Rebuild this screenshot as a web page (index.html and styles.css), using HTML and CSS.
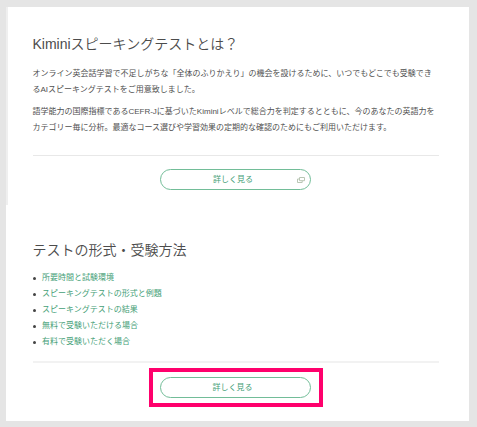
FILE: index.html
```html
<!DOCTYPE html>
<html lang="ja">
<head>
  <meta charset="UTF-8" />
  <meta name="viewport" content="width=device-width, initial-scale=1.0"/>
  <title>Kiminiスピーキングテスト</title>
  <link rel="stylesheet" href="styles.css">
</head>
<body>

<main>
  <section class="about">
    <h2>Kiminiスピーキングテストとは？</h2>
    <p>オンライン英会話学習で不足しがちな「全体のふりかえり」の機会を設けるために、いつでもどこでも受験でき<br>るAIスピーキングテストをご用意致しました。</p>
    <p>語学能力の国際指標であるCEFR-Jに基づいたKiminiレベルで総合力を判定するとともに、今のあなたの英語力を<br>カテゴリー毎に分析。最適なコース選びや学習効果の定期的な確認のためにもご利用いただけます。</p>
    <div class="more">
      <a class="btn" href="#">詳しく見る
        <svg class="icon-blank" viewBox="0 0 8 6" width="8" height="6" fill="none" stroke="#b9c6b4" stroke-width="1">
          <path d="M2.5 .5h5v3.2h-5z"/>
          <path d="M2.3 2H.5v3.5h4.7V3.9"/>
        </svg>
      </a>
    </div>
  </section>

  <section class="format">
    <h2>テストの形式・受験方法</h2>
    <ul>
      <li><a href="#">所要時間と試験環境</a></li>
      <li><a href="#">スピーキングテストの形式と例題</a></li>
      <li><a href="#">スピーキングテストの結果</a></li>
      <li><a href="#">無料で受験いただける場合</a></li>
      <li><a href="#">有料で受験いただく場合</a></li>
    </ul>
    <div class="more">
      <div class="highlight">
        <a class="btn" href="#">詳しく見る</a>
      </div>
    </div>
  </section>
</main>

</body>
</html>
```

FILE: styles.css
```css
* {
  margin: 0;
  padding: 0;
  box-sizing: border-box;
}

body {
  height: 427px;
  padding: 7px 8px 6px 6px;
  background: #e5e5e5;
  color: #505050;
  font-family: "Liberation Sans", "Noto Sans CJK JP", sans-serif;
  font-size: 8px;
  line-height: 16px;
  overflow: hidden;
}

a {
  color: #45a077;
  text-decoration: none;
}

main {
  height: 414px;
  background: #fff;
}

section {
  padding: 27px 30.5px 0 26.5px;
}

.about {
  height: 198px;
  padding-left: 24.5px;
  border-left: 2px solid #efefef;
}

.format {
  padding-top: 35px;
}

h2 {
  color: #4c4c4c;
  font-family: "Liberation Sans", "Noto Sans CJK JP DemiLight", "Noto Sans CJK JP", sans-serif;
  font-size: 14px;
  font-weight: 350;
  line-height: 20px;
  margin-bottom: 12px;
}

p {
  margin-bottom: 6px;
  white-space: nowrap;
}

.more {
  display: flex;
  justify-content: center;
  margin-top: 19px;
  padding-top: 13px;
  border-top: 1px solid #e8e8e8;
}

.btn {
  display: block;
  position: relative;
  width: 151px;
  height: 21px;
  border: 1px solid #72bd98;
  border-radius: 11px;
  line-height: 19px;
  text-align: center;
  padding-right: 5px;
}

.icon-blank {
  position: absolute;
  right: 5px;
  top: 7px;
}

ul {
  list-style: none;
  margin-top: -2px;
}

li {
  display: flex;
  align-items: center;
  height: 16px;
}

li::before {
  content: "";
  width: 3px;
  height: 3px;
  margin: 0 6.5px 0 0;
  border-radius: 50%;
  background: #444;
}

.format .more {
  margin-top: 11px;
  padding-top: 5px;
  border-top: 2px solid #f2f2f2;
}

/* frame round the button to press */
.highlight {
  width: 174px;
  height: 39px;
  padding: 5px 7px;
  border: 4px solid #ff006c;
}
```
